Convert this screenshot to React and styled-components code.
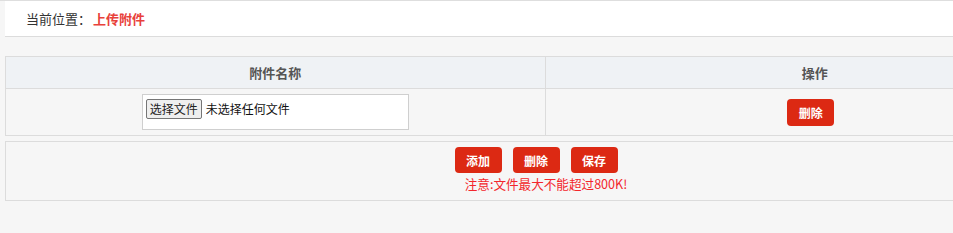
import styled, { createGlobalStyle } from "styled-components";

const GlobalStyle = createGlobalStyle`
  html, body {
    margin: 0;
    padding: 0;
    background: #f6f6f6;
    overflow: hidden;
    font-family: "Microsoft YaHei", "Noto Sans CJK SC", "Liberation Sans", sans-serif;
    font-size: 13px;
    color: #333;
  }
`;

const Page = styled.div`
  width: 1085px;
  padding-left: 5px;
  border-top: 1px solid #dedede;
  box-sizing: border-box;
`;

const Crumb = styled.div`
  height: 35px;
  display: flex;
  align-items: center;
  padding-left: 21px;
  background: #fff;
  border-bottom: 1px solid #dcdcdc;
`;

const CrumbLabel = styled.span`
  color: #333;
`;

const CrumbCurrent = styled.span`
  margin-left: 2px;
  color: #e8413b;
  font-weight: bold;
`;

const Table = styled.table`
  width: 1080px;
  margin-top: 19px;
  border-collapse: collapse;
  table-layout: fixed;
`;

const Th = styled.th`
  height: 31px;
  padding: 0;
  background: #eff2f5;
  border: 1px solid #dcdcdc;
  color: #555;
  font-size: 13px;
  font-weight: bold;
  text-align: center;
`;

const Td = styled.td`
  height: 46px;
  padding: 0;
  border: 1px solid #dcdcdc;
  text-align: center;
  vertical-align: middle;
`;

const FileBox = styled.div`
  width: 259px;
  height: 28px;
  margin: 0 auto;
  padding: 3px;
  box-sizing: content-box;
  display: flex;
  align-items: flex-start;
  gap: 4px;
  background: #fff;
  border: 1px solid #cfcfcf;
`;

const PickButton = styled.button`
  height: 20px;
  padding: 0 3px;
  margin: 1px 0 0 0;
  font-family: inherit;
  font-size: 12px;
  line-height: 16px;
  color: #222;
  background: #efefef;
  border: 1px solid #767676;
  border-radius: 2px;
`;

const FileName = styled.span`
  line-height: 22px;
  color: #111;
  font-size: 12px;
`;

const RedButton = styled.button`
  width: 47px;
  height: ${(p) => (p.tall ? "27px" : "26px")};
  padding: 0;
  border: none;
  border-radius: 4px;
  background: #dc2913;
  color: #fff;
  font-family: inherit;
  font-size: 12px;
  font-weight: bold;
  cursor: pointer;
`;

const RowAction = styled.div`
  display: flex;
  justify-content: center;
  padding-right: 8px;
`;

const Footer = styled.div`
  width: 1080px;
  margin-top: 5px;
  height: 53px;
  box-sizing: content-box;
  border: 1px solid #dcdcdc;
  display: flex;
  flex-direction: column;
  align-items: center;
  padding-top: 5px;
`;

const Buttons = styled.div`
  display: flex;
  gap: 11px;
  padding-right: 20px;
`;

const Notice = styled.div`
  margin-top: 2px;
  color: #f3262c;
  font-size: 12.6px;
  line-height: 18px;
`;

export default function App() {
  return (
    <>
      <GlobalStyle />
      <Page>
        <Crumb>
          <CrumbLabel>当前位置：</CrumbLabel>
          <CrumbCurrent>上传附件</CrumbCurrent>
        </Crumb>
        <Table>
          <thead>
            <tr>
              <Th>附件名称</Th>
              <Th>操作</Th>
            </tr>
          </thead>
          <tbody>
            <tr>
              <Td>
                <FileBox>
                  <PickButton>选择文件</PickButton>
                  <FileName>未选择任何文件</FileName>
                </FileBox>
              </Td>
              <Td>
                <RowAction>
                  <RedButton tall>删除</RedButton>
                </RowAction>
              </Td>
            </tr>
          </tbody>
        </Table>
        <Footer>
          <Buttons>
            <RedButton>添加</RedButton>
            <RedButton>删除</RedButton>
            <RedButton>保存</RedButton>
          </Buttons>
          <Notice>注意:文件最大不能超过800K!</Notice>
        </Footer>
      </Page>
    </>
  );
}
